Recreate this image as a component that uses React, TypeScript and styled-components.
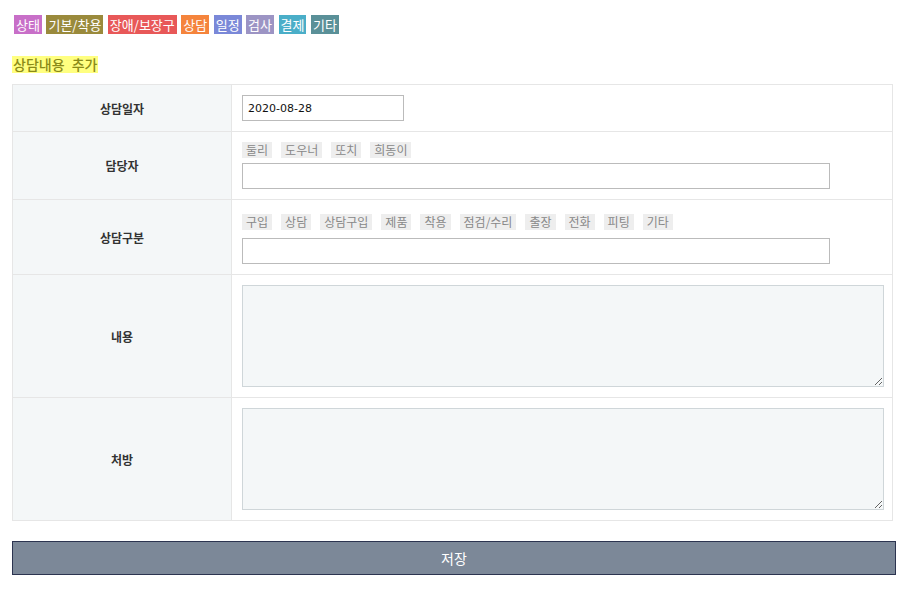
import styled, { createGlobalStyle } from "styled-components";

const GlobalStyle = createGlobalStyle`
  html, body {
    margin: 0;
    padding: 0;
    background: #ffffff;
  }
  body {
    font-family: "Noto Sans CJK KR", "Noto Sans", sans-serif;
    font-size: 13px;
    color: #333333;
  }
  * {
    box-sizing: border-box;
  }
`;

const Page = styled.div`
  padding: 15px 19px 0 12px;
  width: 914px;
`;

const CategoryBar = styled.div`
  display: flex;
  gap: 4.5px;
  padding-left: 2px;
`;

const CategoryTag = styled.span<{ $bg: string }>`
  display: inline-flex;
  align-items: center;
  height: 19px;
  padding: 0 2px;
  background: ${(p) => p.$bg};
  color: #ffffff;
  font-size: 13px;
  line-height: 19px;
`;

const SectionTitle = styled.h3`
  display: inline-block;
  margin: 22px 0 11px 0;
  padding: 0 1px;
  height: 17px;
  line-height: 17px;
  background: #ffff80;
  color: #8a8a18;
  font-size: 14px;
  font-weight: 500;
  word-spacing: 4px;
`;

const FormTable = styled.table`
  width: 881px;
  border-collapse: collapse;
  border: 1px solid #e6e6e6;
`;

const Row = styled.tr`
  border-bottom: 1px solid #e6e6e6;
`;

const LabelCell = styled.th`
  width: 220px;
  background: #f4f7f8;
  border-right: 1px solid #e6e6e6;
  font-size: 12px;
  font-weight: bold;
  color: #333333;
  text-align: center;
  vertical-align: middle;
`;

const FieldCell = styled.td<{ $top?: number }>`
  padding: ${(p) => p.$top ?? 10}px 8px 10px 10px;
  vertical-align: top;
`;

const ChipRow = styled.div<{ $gap?: number }>`
  display: flex;
  gap: 9px;
  margin-bottom: ${(p) => p.$gap ?? 5}px;
`;

const Chip = styled.span`
  display: inline-block;
  height: 16px;
  line-height: 16px;
  padding: 0 4px;
  background: #eeeeee;
  color: #888888;
  font-size: 12px;
  cursor: pointer;
`;

const TextInput = styled.input<{ $width: number }>`
  display: block;
  width: ${(p) => p.$width}px;
  height: 26px;
  padding: 0 5px;
  border: 1px solid #bbbbbb;
  background: #ffffff;
  font-family: "DejaVu Sans", "Liberation Sans", sans-serif;
  font-size: 11px;
  color: #111111;
  outline: none;
`;

const Memo = styled.textarea`
  display: block;
  width: 642px;
  height: 102px;
  border: 1px solid #cfd6d9;
  background: #f4f7f8;
  resize: vertical;
  outline: none;
`;

const SaveButton = styled.button`
  display: block;
  width: 884px;
  height: 34px;
  margin-top: 20px;
  border: 1px solid #2c3450;
  background: #7c8898;
  color: #ffffff;
  font-family: "Noto Sans CJK KR", "Noto Sans", sans-serif;
  font-size: 14px;
  cursor: pointer;
`;

const categories = [
  { label: "상태", color: "#c86fc8" },
  { label: "기본/착용", color: "#9a8a3c" },
  { label: "장애/보장구", color: "#e85858" },
  { label: "상담", color: "#f5843c" },
  { label: "일정", color: "#7a88d8" },
  { label: "검사", color: "#9c94c4" },
  { label: "결제", color: "#4aaec8" },
  { label: "기타", color: "#5a9098" },
];

const staff = ["둘리", "도우너", "또치", "희동이"];
const kinds = ["구입", "상담", "상담구입", "제품", "착용", "점검/수리", "출장", "전화", "피팅", "기타"];

export default function App() {
  return (
    <>
      <GlobalStyle />
      <Page>
        <CategoryBar>
          {categories.map((c) => (
            <CategoryTag key={c.label} $bg={c.color}>
              {c.label}
            </CategoryTag>
          ))}
        </CategoryBar>

        <SectionTitle>상담내용 추가</SectionTitle>

        <FormTable>
          <tbody>
            <Row>
              <LabelCell>상담일자</LabelCell>
              <FieldCell>
                <TextInput $width={162} defaultValue="2020-08-28" />
              </FieldCell>
            </Row>
            <Row>
              <LabelCell>담당자</LabelCell>
              <FieldCell>
                <ChipRow>
                  {staff.map((s) => (
                    <Chip key={s}>{s}</Chip>
                  ))}
                </ChipRow>
                <TextInput $width={588} />
              </FieldCell>
            </Row>
            <Row>
              <LabelCell>상담구분</LabelCell>
              <FieldCell $top={14}>
                <ChipRow $gap={8}>
                  {kinds.map((k) => (
                    <Chip key={k}>{k}</Chip>
                  ))}
                </ChipRow>
                <TextInput $width={588} />
              </FieldCell>
            </Row>
            <Row>
              <LabelCell>내용</LabelCell>
              <FieldCell>
                <Memo />
              </FieldCell>
            </Row>
            <Row>
              <LabelCell>처방</LabelCell>
              <FieldCell>
                <Memo />
              </FieldCell>
            </Row>
          </tbody>
        </FormTable>

        <SaveButton>저장</SaveButton>
      </Page>
    </>
  );
}
